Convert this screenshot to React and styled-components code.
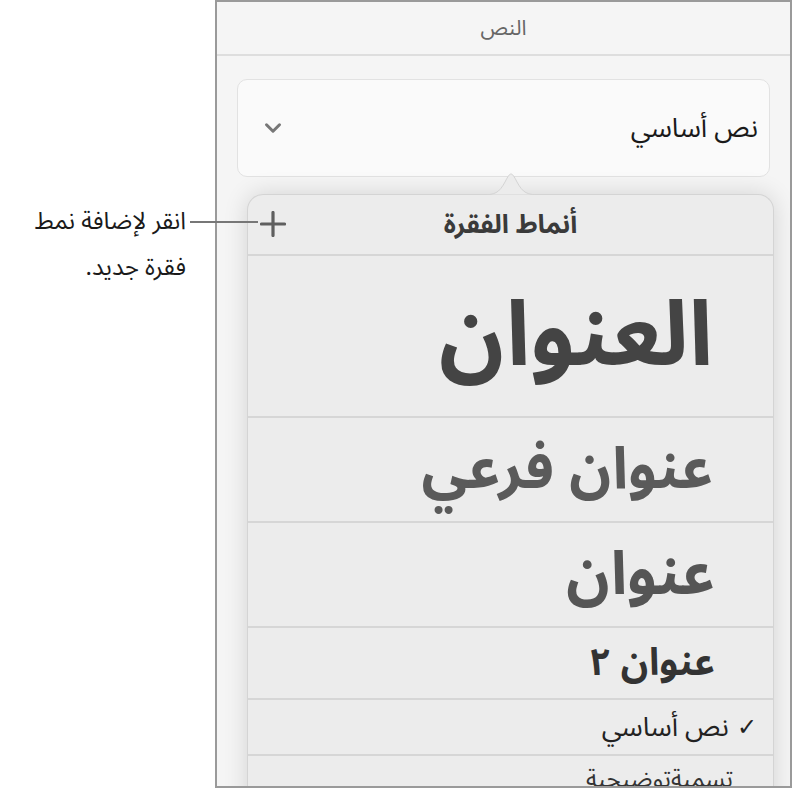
import React from "react";
import styled, { createGlobalStyle } from "styled-components";
import { ChevronDown } from "lucide-react";

const GlobalStyle = createGlobalStyle`
  html, body {
    margin: 0;
    padding: 0;
    background: #fff;
  }
  body {
    font-family: "Noto Sans Arabic", "DejaVu Sans", "Noto Sans", sans-serif;
  }
`;

const styles = [
  { name: "العنوان", size: 90, weight: 700, color: "#444", height: 162, pad: 60 },
  { name: "عنوان فرعي", size: 58, weight: 700, color: "#5a5a5a", height: 105, pad: 60 },
  { name: "عنوان", size: 60, weight: 700, color: "#555", height: 105, pad: 58 },
  { name: "عنوان ٢", size: 38, weight: 700, color: "#333", height: 72, pad: 58 },
  { name: "نص أساسي", size: 27, weight: 400, color: "#222", height: 56, pad: 16, checked: true },
  { name: "تسميةتوضيحية", size: 24, weight: 400, color: "#333", height: 56, pad: 40, caption: true },
];

const App = () => {
  return (
    <>
      <GlobalStyle />
      <Page>
        <CalloutColumn>
          <Callout>
            <CalloutText dir="rtl">
              انقر لإضافة نمط
              <br />
              فقرة جديد.
            </CalloutText>
            <Leader />
          </Callout>
        </CalloutColumn>

        <Panel>
          <PanelHeader dir="rtl">النص</PanelHeader>
          <PanelBody>
            <StyleSelect>
              <ChevronDown size={26} strokeWidth={2.8} color="#777" />
              <SelectLabel dir="rtl">نص أساسي</SelectLabel>
            </StyleSelect>

            <Popover>
              <Arrow width="60" height="30" viewBox="0 0 60 30">
                <path
                  d="M0 29 C14 29 18 27 24 16 C27 10 28.5 8 30 8 C31.5 8 33 10 36 16 C42 27 46 29 60 29 Z"
                  fill="#ececec"
                  stroke="#d4d4d4"
                  strokeWidth="1"
                />
                <rect x="0" y="29" width="60" height="2" fill="#ececec" />
              </Arrow>
              <PopoverHeader>
                <AddButton aria-label="add">
                  <svg width="26" height="26" viewBox="0 0 26 26">
                    <path d="M13 1.5V24.5M1.5 13H24.5" stroke="#5f5f5f" strokeWidth="3.2" strokeLinecap="round" />
                  </svg>
                </AddButton>
                <PopoverTitle dir="rtl">أنماط الفقرة</PopoverTitle>
              </PopoverHeader>

              <StyleList>
                {styles.map((s) => (
                  <StyleRow key={s.name} $height={s.height} $pad={s.pad} $caption={s.caption}>
                    {s.checked && <Check>✓</Check>}
                    <StyleName dir="rtl" $size={s.size} $weight={s.weight} $color={s.color}>
                      {s.name}
                    </StyleName>
                  </StyleRow>
                ))}
              </StyleList>
            </Popover>
          </PanelBody>
        </Panel>
      </Page>
    </>
  );
};

const Page = styled.div`
  display: flex;
  width: 793px;
  height: 788px;
  overflow: hidden;
`;

const CalloutColumn = styled.div`
  width: 215px;
  flex-shrink: 0;
  padding-top: 199px;
  box-sizing: border-box;
  position: relative;
  z-index: 2;
`;

const Callout = styled.div`
  position: relative;
  width: 186px;
`;

const CalloutText = styled.div`
  font-size: 24px;
  line-height: 46px;
  color: #1a1a1a;
  text-align: right;
`;

const Leader = styled.div`
  position: absolute;
  left: 190px;
  top: 22px;
  width: 68px;
  height: 2px;
  background: #777;
`;

const Panel = styled.div`
  width: 577px;
  height: 788px;
  box-sizing: border-box;
  border: 2px solid #9a9a9a;
  background: #f5f5f5;
  display: flex;
  flex-direction: column;
  overflow: hidden;
  flex-shrink: 0;
`;

const PanelHeader = styled.div`
  height: 52px;
  flex-shrink: 0;
  border-bottom: 2px solid #dedede;
  display: flex;
  align-items: center;
  justify-content: center;
  font-size: 21px;
  color: #666;
`;

const PanelBody = styled.div`
  flex: 1;
  display: flex;
  flex-direction: column;
  padding: 23px 20px 0 20px;
  min-height: 0;
`;

const StyleSelect = styled.div`
  height: 98px;
  box-sizing: border-box;
  border: 1px solid #e2e2e2;
  border-radius: 10px;
  background: #fafafa;
  display: flex;
  align-items: center;
  justify-content: space-between;
  padding: 0 11px 0 22px;
  flex-shrink: 0;
`;

const SelectLabel = styled.span`
  font-size: 27px;
  color: #1a1a1a;
`;

const Popover = styled.div`
  position: relative;
  margin: 17px -4px 0 10px;
  flex: 1;
  background: #ececec;
  border: 1px solid #d4d4d4;
  border-bottom: none;
  border-radius: 16px 16px 0 0;
  box-shadow: 0 0 24px rgba(0, 0, 0, 0.14);
  display: flex;
  flex-direction: column;
`;

const Arrow = styled.svg`
  position: absolute;
  top: -29px;
  left: 233px;
`;

const PopoverHeader = styled.div`
  height: 59px;
  flex-shrink: 0;
  border-bottom: 2px solid #d6d6d6;
  display: flex;
  align-items: center;
  position: relative;
  padding-left: 12px;
`;

const AddButton = styled.div`
  width: 26px;
  height: 26px;
  display: flex;
  margin-top: -2px;
`;

const PopoverTitle = styled.div`
  position: absolute;
  left: 0;
  right: 0;
  text-align: center;
  font-size: 26px;
  line-height: 1.2;
  font-weight: 700;
  color: #3a3a3a;
  pointer-events: none;
`;

const StyleList = styled.div`
  display: flex;
  flex-direction: column;
`;

const StyleRow = styled.div`
  height: ${(p) => p.$height}px;
  flex-shrink: 0;
  box-sizing: border-box;
  border-bottom: 2px solid #d6d6d6;
  display: flex;
  align-items: ${(p) => (p.$caption ? "flex-start" : "center")};
  justify-content: flex-end;
  gap: 8px;
  padding-right: ${(p) => p.$pad}px;
  padding-top: ${(p) => (p.$caption ? 12 : 0)}px;
`;

const Check = styled.span`
  order: 2;
  font-size: 24px;
  font-weight: 700;
  color: #222;
  font-family: "DejaVu Sans", sans-serif;
`;

const StyleName = styled.span`
  font-size: ${(p) => p.$size}px;
  font-weight: ${(p) => p.$weight};
  color: ${(p) => p.$color};
  line-height: 1;
`;

export default App;
